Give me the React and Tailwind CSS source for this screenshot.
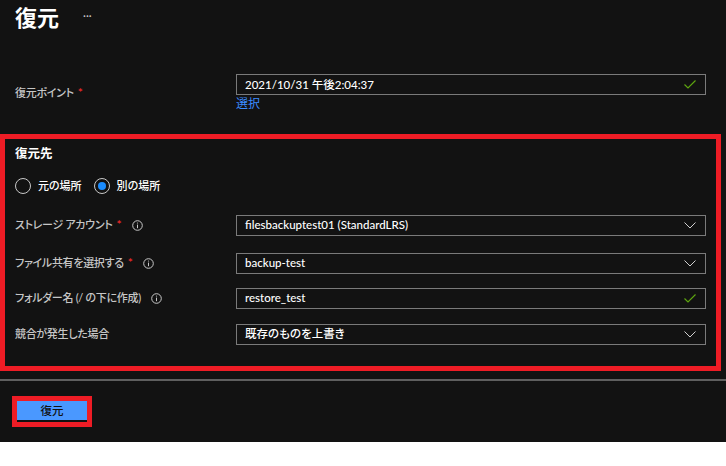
import React from 'react';

const font = { fontFamily: '"Lato", "Noto Sans CJK JP", sans-serif' };

const InfoIcon = () => (
  <svg width="11" height="11" viewBox="0 0 11 11" className="ml-[10px] shrink-0">
    <circle cx="5.5" cy="5.5" r="4.8" fill="none" stroke="#c8c8c8" strokeWidth="1" />
    <line x1="5.5" y1="4.6" x2="5.5" y2="8.2" stroke="#c8c8c8" strokeWidth="1" />
    <circle cx="5.5" cy="3" r="0.6" fill="#c8c8c8" />
  </svg>
);

const Chevron = () => (
  <svg width="12" height="7" viewBox="0 0 12 7" className="shrink-0">
    <polyline points="0.5,0.5 6,6 11.5,0.5" fill="none" stroke="#d0d0d0" strokeWidth="1" />
  </svg>
);

const Check = () => (
  <svg width="12" height="9" viewBox="0 0 12 9" className="shrink-0">
    <polyline points="0.5,4.5 4,8 11.5,0.5" fill="none" stroke="#5ea510" strokeWidth="1.2" />
  </svg>
);

const Field = ({ value, icon }) => (
  <div className="w-[470px] h-[21px] border border-[#7a7a7a] flex items-center pl-[8px] pr-[9px] text-white text-[11.5px] font-medium">
    <span className="flex-1 leading-none">{value}</span>
    {icon === 'check' ? <Check /> : <Chevron />}
  </div>
);

const Label = ({ text, required, info }) => (
  <div className="w-[221px] flex items-center text-[11px] text-[#c6c6c6] font-medium">
    <span className="tracking-[-0.3px]">{text}</span>
    {required && <span className="text-[#ff2a2a] ml-[4px] text-[12px]">*</span>}
    {info && <InfoIcon />}
  </div>
);

const Radio = ({ label, checked }) => (
  <div className="flex items-center mr-[12px]">
    <div className="w-[16px] h-[16px] rounded-full border border-[#c8c8c8] flex items-center justify-center">
      {checked && <div className="w-[8px] h-[8px] rounded-full bg-[#1a8cff]" />}
    </div>
    <span className="ml-[7px] text-[11px] text-white font-medium">{label}</span>
  </div>
);

export default function App() {
  return (
    <div style={font} className="bg-[#121212] h-[442px] w-full overflow-hidden [font-feature-settings:'palt']">
      <div className="flex items-center pl-[15px] pt-[4px] h-[32px]">
        <h1 className="text-[22px] font-bold text-white leading-[28px]">復元</h1>
        <span className="ml-[24px] text-[#c8c8c8] text-[11px] leading-none mt-[-6px]">···</span>
      </div>

      <div className="flex pl-[15px] mt-[42px]">
        <Label text="復元ポイント" required />
        <div>
          <Field value="2021/10/31 午後2:04:37" icon="check" />
          <div className="text-[12px] text-[#3b8cff] mt-[1px] leading-[16px]">選択</div>
        </div>
      </div>

      <div className="mt-[22px] w-[721px] h-[237px] border-[5px] border-[#ee1c25] pl-[10px]">
        <div className="text-[12.5px] font-bold text-white mt-[6px] leading-[18px]">復元先</div>
        <div className="flex items-center mt-[15px]">
          <Radio label="元の場所" />
          <Radio label="別の場所" checked />
        </div>
        <div className="flex mt-[20px]">
          <Label text="ストレージ アカウント" required info />
          <Field value="filesbackuptest01 (StandardLRS)" />
        </div>
        <div className="flex mt-[17px]">
          <Label text="ファイル共有を選択する" required info />
          <Field value="backup-test" />
        </div>
        <div className="flex mt-[14px]">
          <Label text="フォルダー名 (/ の下に作成)" info />
          <Field value="restore_test" icon="check" />
        </div>
        <div className="flex mt-[15px]">
          <Label text="競合が発生した場合" />
          <Field value="既存のものを上書き" />
        </div>
      </div>

      <div className="mt-[8px] h-[2px] bg-[#5f5f5f]" />

      <div className="pl-[12px] mt-[15px]">
        <div className="inline-block border-[5px] border-[#ee1c25]">
          <button className="w-[70px] h-[21px] bg-[#4a98ff] border-b-2 border-[#111] text-[11.5px] text-[#111] font-medium leading-none flex items-center justify-center">
            復元
          </button>
        </div>
      </div>
    </div>
  );
}
